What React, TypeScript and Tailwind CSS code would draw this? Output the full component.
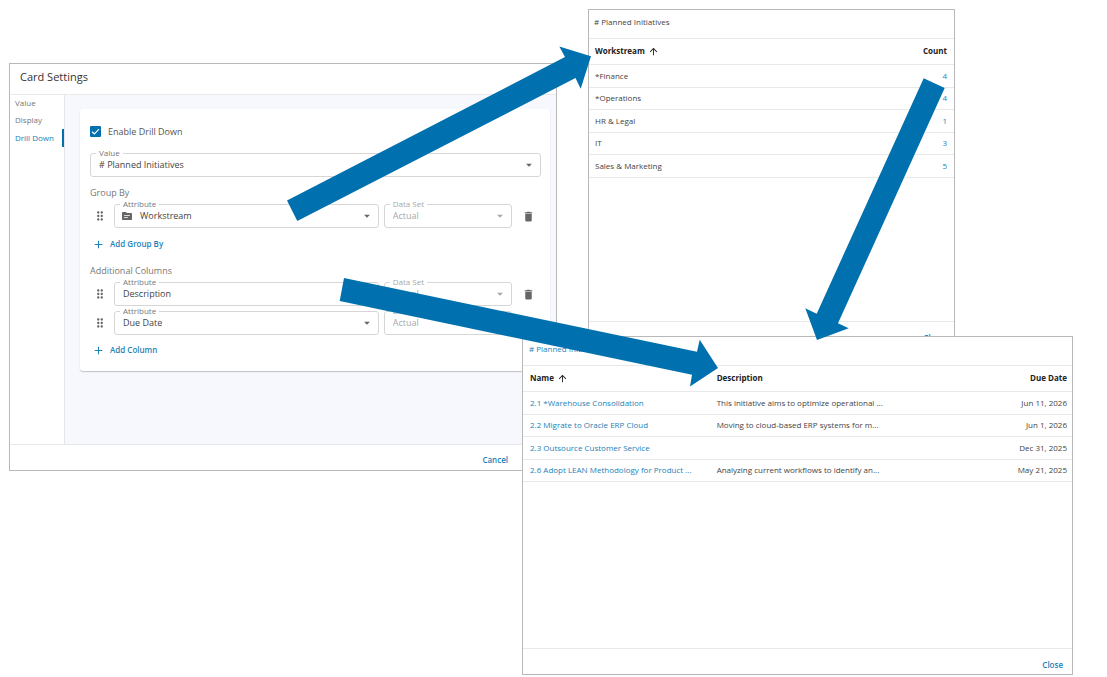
import type { ReactNode } from "react";
import { MdArrowDropDown, MdArrowUpward, MdDragIndicator, MdAdd } from "react-icons/md";

type FieldProps = {
  id: string;
  label: string;
  value: string;
  disabled?: boolean;
  icon?: ReactNode;
  className?: string;
};

function TrashIcon() {
  return (
    <svg viewBox="0 0 24 24" className="size-[13px] text-[#666]" fill="currentColor" aria-hidden="true">
      <path d="M6 19c0 1.1.9 2 2 2h8c1.1 0 2-.9 2-2V7H6v12zM19 4h-3.5l-1-1h-5l-1 1H5v2h14V4z" />
    </svg>
  );
}

function FolderIcon() {
  return (
    <svg viewBox="0 0 24 24" className="-ml-[2px] mr-[7px] size-3 shrink-0 text-[#666]" fill="currentColor" aria-hidden="true">
      <path
        fillRule="evenodd"
        d="M20 6h-8l-2-2H4c-1.1 0-2 .9-2 2v12c0 1.100.9 2 2 2h16c1.100 0 2-.9 2-2V8c0-1.100-.9-2-2-2zM14 16H6v-1.600h8V16zM18 12.200H6v-1.600h12v1.600z"
      />
    </svg>
  );
}

function SelectField({ id, label, value, disabled, icon, className }: FieldProps) {
  return (
    <div className={`relative flex h-6 items-center rounded-[3px] border border-[#d6d6d6] px-2 ${className ?? ""}`}>
      <label
        htmlFor={id}
        className={`absolute -top-[6px] left-[5px] bg-white px-[3px] text-[8px] leading-[10px] ${disabled ? "text-[#a8a8a8]" : "text-[#777]"}`}
      >
        {label}
      </label>
      {icon}
      <select
        id={id}
        disabled={disabled}
        className={`min-w-0 flex-1 appearance-none bg-transparent text-[9px] leading-[14px] opacity-100 outline-none ${disabled ? "text-[#a8a8a8]" : "text-[#444]"}`}
      >
        <option>{value}</option>
      </select>
      <MdArrowDropDown className={`-mr-1 size-[14px] shrink-0 ${disabled ? "text-[#a8a8a8]" : "text-[#666]"}`} />
    </div>
  );
}

type RowProps = { id: string; attribute: string; icon?: ReactNode; removable?: boolean };

function AttributeRow({ id, attribute, icon, removable }: RowProps) {
  return (
    <div className="flex items-center pl-[3px]">
      <MdDragIndicator className="mr-[7px] size-[14px] shrink-0 text-[#666]" />
      <SelectField id={`${id}-attribute`} label="Attribute" value={attribute} icon={icon} className="min-w-0 flex-[246]" />
      <SelectField id={`${id}-dataset`} label="Data Set" value="Actual" disabled className="ml-[5px] min-w-0 flex-[110]" />
      <div className="ml-[10px] mr-[6px] flex size-[13px] shrink-0 items-center justify-center">
        {removable && (
          <button type="button" aria-label={`Remove ${attribute}`}>
            <TrashIcon />
          </button>
        )}
      </div>
    </div>
  );
}

function AddButton({ children }: { children: ReactNode }) {
  return (
    <button type="button" className="flex h-[14px] items-center gap-[5px] pl-[2px] text-[8px] font-semibold text-[#1c82b8]">
      <MdAdd className="size-[13px]" />
      {children}
    </button>
  );
}

function CardSettings() {
  return (
    <section className="col-start-2 col-end-4 row-start-1 mt-[63px] min-w-0 self-start border border-[#b8b8b8] bg-white">
      <h1 className="flex h-[30px] items-center px-[10px] pb-1 text-[11px] text-[#333]">Card Settings</h1>
      <div className="flex min-h-[351px] border-y border-[#e9e9e9]">
        <nav className="flex w-[55px] shrink-0 flex-col border-r border-[#e4e6e8] text-[8px] text-[#777]">
          <a href="#value" className="flex h-4 items-center pl-[5px]">Value</a>
          <a href="#display" className="flex h-[18px] items-center pl-[5px]">Display</a>
          <a href="#drill" className="flex h-[18px] items-center whitespace-nowrap border-r-2 border-[#0071ae] pl-[5px] text-[#1c82b8]">
            Drill Down
          </a>
        </nav>
        <div className="min-w-0 flex-1 bg-[#f7f8fd] pl-[15px] pr-[6px] pt-[14px]">
          <div className="rounded-[3px] bg-white pb-[14px] pl-[10px] pr-[9px] pt-[15px] shadow-[0_1px_1px_#bfc1c4]">
            <div className="flex h-[15px] items-center">
              <input id="enable" type="checkbox" defaultChecked className="peer sr-only" />
              <label htmlFor="enable" className="flex items-center gap-[7px] text-[9px] text-[#555]">
                <svg viewBox="0 0 11 11" className="size-[11px]" aria-hidden="true">
                  <rect width="11" height="11" rx="1" fill="#0071ae" />
                  <path d="M2 5.7 4.4 8 9 3.2" fill="none" stroke="#fff" strokeWidth="1.2" />
                </svg>
                Enable Drill Down
              </label>
            </div>
            <div className="pt-[14px]">
              <SelectField id="value" label="Value" value="# Planned Initiatives" />
            </div>
            <h2 className="mt-2 mb-[4px] text-[9px] leading-[15px] text-[#777]">Group By</h2>
            <AttributeRow id="workstream" attribute="Workstream" removable icon={<FolderIcon />} />
            <div className="mt-[9px]">
              <AddButton>Add Group By</AddButton>
            </div>
            <h2 className="mt-[12px] mb-[4px] text-[9px] leading-[15px] text-[#777]">Additional Columns</h2>
            <div className="flex flex-col gap-[5px]">
              <AttributeRow id="description" attribute="Description" removable />
              <AttributeRow id="due" attribute="Due Date" />
            </div>
            <div className="mt-2">
              <AddButton>Add Column</AddButton>
            </div>
          </div>
        </div>
      </div>
      <footer className="flex h-[25px] items-center justify-end pr-12 pt-1">
        <button type="button" className="text-[8px] font-semibold text-[#1c82b8]">Cancel</button>
      </footer>
    </section>
  );
}

const workstreams = [
  ["*Finance", 4],
  ["*Operations", 4],
  ["HR & Legal", 1],
  ["IT", 3],
  ["Sales & Marketing", 5],
] as const;

function WorkstreamWindow() {
  return (
    <section className="col-start-5 col-end-7 row-start-1 mt-[9px] min-w-0 self-start border border-[#b8b8b8] bg-white text-[8px] text-[#444]">
      <h2 className="flex h-7 items-center px-[5px] pb-1">
        <span># Planned Initiatives</span>
      </h2>
      <div className="min-h-[284px] border-y border-[#e9e9e9]">
        <table className="w-full border-collapse">
          <thead>
            <tr className="h-[25px] border-b border-[#e9e9e9] font-bold text-[#222]">
              <th className="px-[6px] text-left">
                <span className="flex items-center gap-[3px]">
                  Workstream <MdArrowUpward className="size-[11px]" />
                </span>
              </th>
              <th className="px-[7px] text-right">Count</th>
            </tr>
          </thead>
          <tbody>
            {workstreams.map(([name, count]) => (
              <tr key={name} className="border-b border-[#e9e9e9] odd:h-[23px] even:h-[22px]">
                <td className="px-[6px]">{name}</td>
                <td className="px-[7px] text-right">
                  <a href="#initiatives" className="text-[#1c82b8]">{count}</a>
                </td>
              </tr>
            ))}
          </tbody>
        </table>
      </div>
      <footer className="flex h-[27px] items-center justify-end pr-[10px] pt-1">
        <button type="button" className="font-semibold text-[#1c82b8]">Close</button>
      </footer>
    </section>
  );
}

const initiatives = [
  ["2.1 *Warehouse Consolidation", "This initiative aims to optimize operational ...", "Jun 11, 2026"],
  ["2.2 Migrate to Oracle ERP Cloud", "Moving to cloud-based ERP systems for m...", "Jun 1, 2026"],
  ["2.3 Outsource Customer Service", "", "Dec 31, 2025"],
  ["2.6 Adopt LEAN Methodology for Product ...", "Analyzing current workflows to identify an...", "May 21, 2025"],
];

function InitiativesWindow() {
  return (
    <section className="z-10 col-start-3 col-end-8 row-start-1 mt-[336px] min-w-0 self-start border border-[#b8b8b8] bg-white text-[8px] text-[#444]">
      <h2 className="flex h-7 items-center px-[6px] pb-1">
        <a href="#planned" className="text-[#1c82b8]"># Planned Initiatives</a>
      </h2>
      <div className="min-h-[284px] border-y border-[#e9e9e9]">
        <table className="w-full table-fixed border-collapse">
          <thead>
            <tr className="h-[25px] border-b border-[#e9e9e9] font-bold text-[#222]">
              <th className="w-[34%] pl-[7px] text-left">
                <span className="flex items-center gap-[3px]">
                  Name <MdArrowUpward className="size-[11px]" />
                </span>
              </th>
              <th className="w-[42%] pl-[7px] text-left">Description</th>
              <th className="pr-[5px] text-right">Due Date</th>
            </tr>
          </thead>
          <tbody>
            {initiatives.map(([name, description, due]) => (
              <tr key={name} className="whitespace-nowrap border-b border-[#e9e9e9] odd:h-[23px] even:h-[22px]">
                <td className="pl-[7px]">
                  <a href="#initiative" className="text-[#1c82b8]">{name}</a>
                </td>
                <td className="pl-[7px]">{description}</td>
                <td className="pr-[5px] text-right">{due}</td>
              </tr>
            ))}
          </tbody>
        </table>
      </div>
      <footer className="flex h-[25px] items-center justify-end pr-[9px] pt-[6px]">
        <button type="button" className="font-semibold text-[#1c82b8]">Close</button>
      </footer>
    </section>
  );
}

export default function App() {
  return (
    <main className="relative grid min-h-screen grid-cols-[9fr_513fr_35fr_31fr_367fr_0fr_118fr_34fr] bg-white font-['Open_Sans',sans-serif]">
      <CardSettings />
      <WorkstreamWindow />
      <InitiativesWindow />
      <svg
        viewBox="0 0 1107 677"
        preserveAspectRatio="none"
        className="pointer-events-none absolute left-0 top-0 z-20 h-[677px] w-full"
        fill="#0071ae"
        aria-hidden="true"
      >
        <path d="M287 200.5 565 57 559.3 46.5 591 56.3 580.7 88.7 575.5 78 297.3 221Z" />
        <path d="M344 278 697 351.7 699.7 339.7 718 368 690 386.5 692 374.7 339.7 301Z" />
        <path d="M923.7 78.3 944.7 88 838 323.3 848.7 328.3 817 340 805.3 308.3 816.7 313.7Z" />
      </svg>
    </main>
  );
}
